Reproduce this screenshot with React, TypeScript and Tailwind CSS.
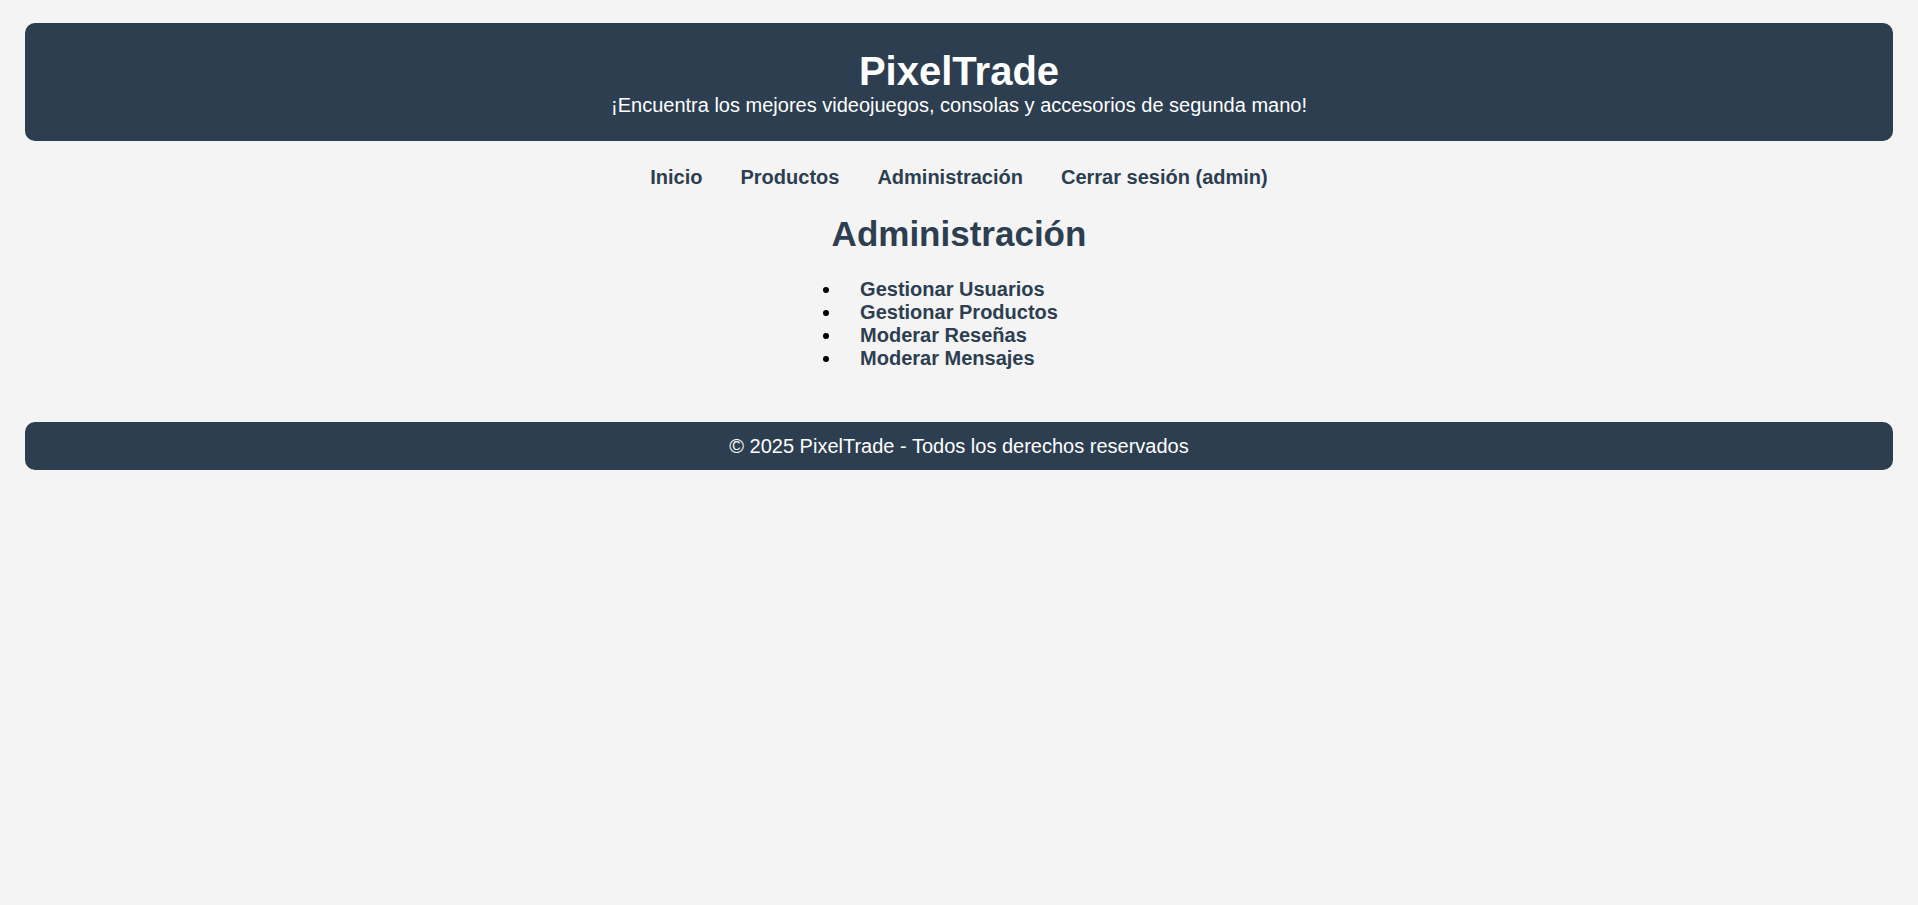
const navLinks = ['Inicio', 'Productos', 'Administración', 'Cerrar sesión (admin)'];

const adminLinks = [
  'Gestionar Usuarios',
  'Gestionar Productos',
  'Moderar Reseñas',
  'Moderar Mensajes',
];

export default function App() {
  return (
    <div className="min-h-screen bg-[#f4f4f4] px-[25px] pt-[23px] font-['Liberation_Sans',Arial,sans-serif] text-black">
      {/* Header */}
      <header className="rounded-[10px] bg-[#2c3e50] pt-[25px] pb-[24px] text-center text-white">
        <h1 className="text-[40px] font-bold leading-[46px]">PixelTrade</h1>
        <p className="text-[20px] leading-[23px]">
          ¡Encuentra los mejores videojuegos, consolas y accesorios de segunda mano!
        </p>
      </header>

      {/* Nav */}
      <nav className="mt-[25px] flex justify-center">
        {navLinks.map((link) => (
          <a
            key={link}
            href="#"
            className="mx-[19px] text-[20px] font-bold leading-[23px] text-[#2c3e50]"
          >
            {link}
          </a>
        ))}
      </nav>

      <main className="text-center">
        <h2 className="mt-[25px] text-[35px] font-bold leading-[40px] text-[#2c3e50]">
          Administración
        </h2>

        <ul className="mx-auto mt-[24px] w-fit list-disc pl-[50px] pr-[68px] text-left text-[20px] leading-[23px]">
          {adminLinks.map((item) => (
            <li key={item} className="pl-[18px]">
              <a href="#" className="font-bold text-[#2c3e50]">
                {item}
              </a>
            </li>
          ))}
        </ul>
      </main>

      {/* Footer */}
      <footer className="mt-[52px] rounded-[10px] bg-[#2c3e50] pt-[13px] pb-[12px] text-center text-[20px] leading-[23px] text-white">
        © 2025 PixelTrade - Todos los derechos reservados
      </footer>
    </div>
  );
}
